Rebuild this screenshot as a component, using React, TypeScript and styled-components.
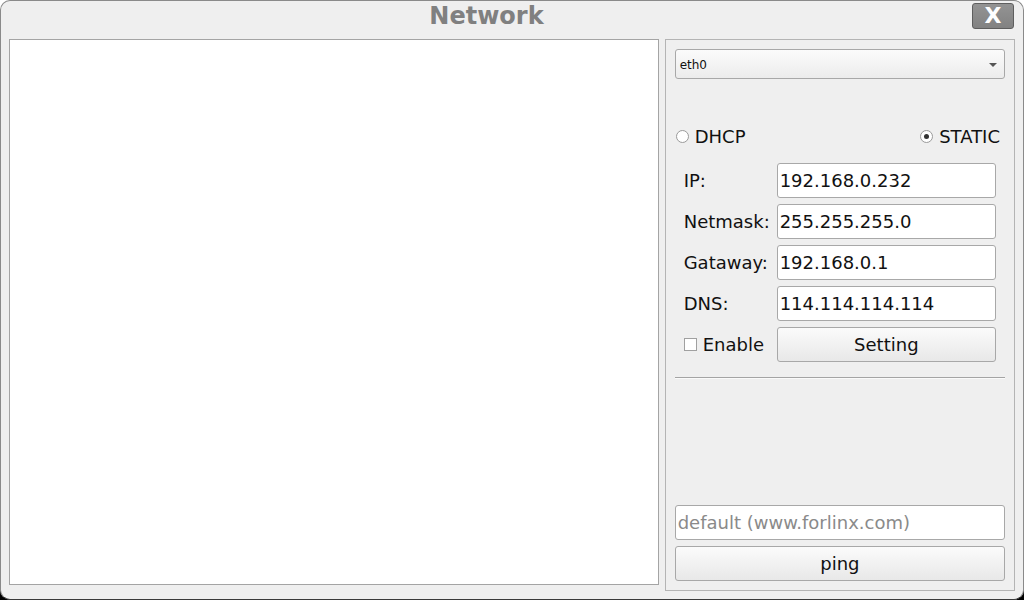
import React from "react";
import styled, { createGlobalStyle } from "styled-components";

const Global = createGlobalStyle`
  html, body { margin: 0; padding: 0; }
  body {
    width: 1024px; height: 600px; overflow: hidden;
    background: linear-gradient(#ffffff 0 50%, #000000 50% 100%);
    font-family: "DejaVu Sans", "Liberation Sans", sans-serif;
  }
  * { box-sizing: border-box; }
`;

const Window = styled.div`
  width: 1024px;
  height: 600px;
  background: #efefef;
  border: 1px solid #8a8a8a;
  border-bottom-color: #3a3a3a;
  border-radius: 10px;
  display: flex;
  flex-direction: column;
  overflow: hidden;
`;

const TitleBar = styled.div`
  height: 38px;
  display: flex;
  align-items: flex-start;
  padding-right: 9px;
`;

const Title = styled.div`
  flex: 1;
  text-align: center;
  font-weight: bold;
  font-size: 24px;
  line-height: 28px;
  padding-top: 1px;
  color: #808080;
`;

const CloseButton = styled.div`
  margin-top: 2px;
  width: 42px;
  height: 26px;
  background: linear-gradient(#939393, #828282);
  border: 1px solid #5e5e5e;
  border-radius: 3px;
  color: #ffffff;
  font-weight: bold;
  font-size: 22px;
  line-height: 24px;
  text-align: center;
`;

const Body = styled.div`
  display: flex;
  align-items: flex-start;
  gap: 6px;
  padding: 0 8px 0 8px;
`;

const Canvas = styled.div`
  width: 651px;
  height: 546px;
  background: #ffffff;
  border: 1px solid #a4a4a4;
`;

const Frame = styled.div`
  width: 351px;
  height: 552px;
  border: 1px solid #b4b4b4;
  padding: 9px;
  display: flex;
  flex-direction: column;
`;

const Combo = styled.div`
  height: 30px;
  border: 1px solid #a8a8a8;
  border-radius: 3px;
  background: linear-gradient(#fbfbfb, #ececec);
  display: flex;
  align-items: center;
  justify-content: space-between;
  padding: 1px 7px 0 4px;
  font-size: 12px;
  color: #111;
`;

const Arrow = styled.span`
  width: 0;
  height: 0;
  border-left: 4px solid transparent;
  border-right: 4px solid transparent;
  border-top: 4px solid #555;
`;

const RadioRow = styled.div`
  margin-top: 47px;
  height: 20px;
  display: flex;
  justify-content: space-between;
  align-items: center;
  padding: 0 5px 0 1px;
`;

const Choice = styled.label`
  display: flex;
  align-items: center;
  gap: 6px;
  font-size: 18px;
  color: #111;
`;

const RadioDot = styled.span<{ $on?: boolean }>`
  width: 13px;
  height: 13px;
  border-radius: 50%;
  border: 1px solid #9a9a9a;
  background: #ffffff;
  display: flex;
  align-items: center;
  justify-content: center;
  &::after {
    content: "";
    width: 5px;
    height: 5px;
    border-radius: 50%;
    background: ${(p) => (p.$on ? "#333" : "transparent")};
  }
`;

const Form = styled.div`
  margin-top: 17px;
  padding: 0 9px;
  display: grid;
  grid-template-columns: 93px 1fr;
  grid-auto-rows: 35px;
  row-gap: 6px;
`;

const Label = styled.div`
  display: flex;
  align-items: center;
  font-size: 18px;
  color: #111;
`;

const Field = styled.div<{ $placeholder?: boolean }>`
  background: #ffffff;
  border: 1px solid #a8a8a8;
  border-radius: 3px;
  display: flex;
  align-items: center;
  padding-left: 2px;
  font-size: 18px;
  color: ${(p) => (p.$placeholder ? "#8a8a8a" : "#111")};
  height: 35px;
`;

const Button = styled.div`
  background: linear-gradient(#fbfbfb, #e8e8e8);
  border: 1px solid #a8a8a8;
  border-radius: 3px;
  display: flex;
  align-items: center;
  justify-content: center;
  font-size: 18px;
  color: #111;
  height: 35px;
`;

const CheckBox = styled.span`
  width: 13px;
  height: 13px;
  border: 1px solid #a0a0a0;
  background: #ffffff;
`;

const Separator = styled.div`
  margin-top: 15px;
  height: 2px;
  border-top: 1px solid #a4a4a4;
  border-bottom: 1px solid #fafafa;
`;

const Spacer = styled.div`
  flex: 1;
`;

const Bottom = styled.div`
  display: flex;
  flex-direction: column;
  gap: 6px;
`;

export default function App() {
  return (
    <>
      <Global />
      <Window>
        <TitleBar>
          <Title>Network</Title>
          <CloseButton>X</CloseButton>
        </TitleBar>
        <Body>
          <Canvas />
          <Frame>
            <Combo>
              <span>eth0</span>
              <Arrow />
            </Combo>
            <RadioRow>
              <Choice>
                <RadioDot />
                DHCP
              </Choice>
              <Choice>
                <RadioDot $on />
                STATIC
              </Choice>
            </RadioRow>
            <Form>
              <Label>IP:</Label>
              <Field>192.168.0.232</Field>
              <Label>Netmask:</Label>
              <Field>255.255.255.0</Field>
              <Label>Gataway:</Label>
              <Field>192.168.0.1</Field>
              <Label>DNS:</Label>
              <Field>114.114.114.114</Field>
              <Choice>
                <CheckBox />
                Enable
              </Choice>
              <Button>Setting</Button>
            </Form>
            <Separator />
            <Spacer />
            <Bottom>
              <Field $placeholder>default (www.forlinx.com)</Field>
              <Button>ping</Button>
            </Bottom>
          </Frame>
        </Body>
      </Window>
    </>
  );
}
